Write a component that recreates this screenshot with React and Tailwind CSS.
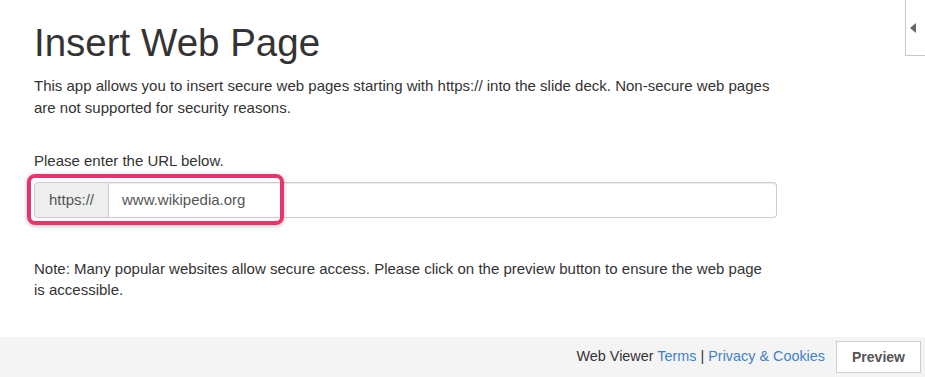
export default function App() {
  return (
    <div className="relative w-[925px] h-[377px] bg-white flex flex-col font-['Liberation_Sans',Arial,sans-serif] text-[#333] overflow-hidden">
      <div className="absolute right-0 top-0 w-[20px] h-[56px] border-l border-b border-[#c8c8c8] bg-white flex items-center justify-center">
        <svg width="6" height="10" viewBox="0 0 6 10" className="ml-[-6px] mt-[1px]">
          <polygon points="6,0 0,5 6,10" fill="#666" />
        </svg>
      </div>
      <main className="flex-1 pl-[34px] pr-[148px]">
        <h1 className="mt-[22px] text-[38.5px] leading-[1.1] font-normal">Insert Web Page</h1>
        <p className="mt-[11px] text-[15px] leading-[22px]">
          This app allows you to insert secure web pages starting with https:// into the slide deck. Non-secure web pages are not supported for security reasons.
        </p>
        <p className="mt-[31px] text-[15px] leading-[22px]">Please enter the URL below.</p>
        <div className="relative mt-[10px] flex h-[36px] w-[743px] text-[15px]">
          <div className="flex items-center px-[14px] bg-[#eeeeee] border border-[#cccccc] rounded-l-[4px] text-[#555]">https://</div>
          <div className="flex-1 flex items-center pl-[13px] border border-l-0 border-[#cccccc] rounded-r-[4px] text-[#555] shadow-[inset_0_1px_1px_rgba(0,0,0,0.075)]">www.wikipedia.org</div>
          <div className="absolute left-[-7px] top-[-8px] w-[257px] h-[51px] border-[4px] border-[#e8336b] rounded-[8px] shadow-[0_1px_4px_rgba(0,0,0,0.25)]"></div>
        </div>
        <p className="mt-[40px] w-[742px] text-[15px] leading-[21px]">
          Note: Many popular websites allow secure access. Please click on the preview button to ensure the web page is accessible.
        </p>
      </main>
      <footer className="h-[40px] bg-[#f4f4f4] flex items-center justify-end pr-[4px] text-[14.4px]">
        <span className="text-[#333]">Web Viewer <span className="text-[#3f82c4]">Terms</span> | <span className="text-[#3f82c4]">Privacy &amp; Cookies</span></span>
        <button className="ml-[11px] h-[32px] w-[85px] bg-white border border-[#d0d0d0] text-[#555] font-semibold text-[14px]">Preview</button>
      </footer>
    </div>
  );
}
